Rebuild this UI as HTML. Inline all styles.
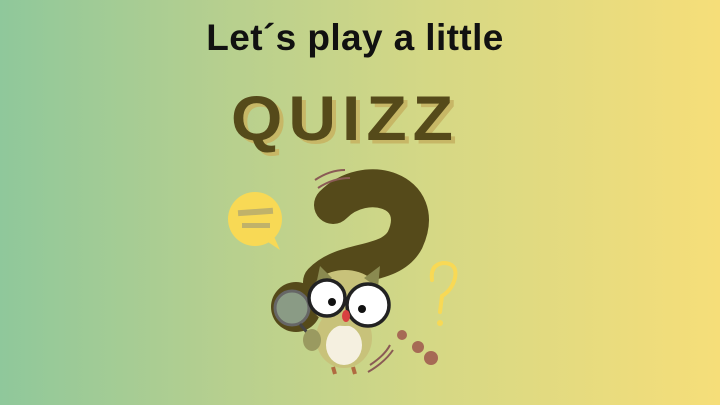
<!DOCTYPE html>
<html><head><meta charset="utf-8"><style>
html,body{margin:0;padding:0}
body{width:720px;height:405px;overflow:hidden;position:relative;background:linear-gradient(90deg,#8fc89b 0%,#b5cf8f 30%,#d5d885 60%,#f6de79 100%);font-family:"Liberation Sans",sans-serif}
.t1{position:absolute;left:-5px;width:720px;top:17px;text-align:center;font-size:37px;font-weight:bold;color:#111;letter-spacing:0.4px}
.q{position:absolute;left:-15px;width:720px;top:80px;text-align:center;font-size:66px;font-weight:900;color:#554a1a;letter-spacing:6px;text-shadow:4px 4px 0 #c7b766;transform:scale(1,0.95)}
svg{position:absolute;left:0;top:0}
</style></head><body>
<div class="t1">Let´s play a little</div>
<div class="q">QUIZZ</div>
<svg width="720" height="405">
<path d="M333 205 C365 172,428 190,405 240 C390 268,345 258,322 282" fill="none" stroke="#554a1a" stroke-width="38" stroke-linecap="round"/>
<path d="M315 180 Q330 170 345 170 M318 188 Q333 178 350 178" stroke="#8a5a55" stroke-width="2" fill="none"/>
<circle cx="255" cy="219" r="27" fill="#f8d955"/>
<path d="M262 238 L280 250 L272 232Z" fill="#f8d955"/>
<rect x="238" y="209" width="35" height="6" fill="#c0b26a" transform="rotate(-4 255 212)"/>
<rect x="242" y="223" width="28" height="5" fill="#c0b26a"/>
<path d="M432 280 Q430 265 443 263 Q458 263 455 278 Q452 290 442 296 L440 312" fill="none" stroke="#f8d955" stroke-width="4" stroke-linecap="round"/>
<circle cx="440" cy="323" r="3" fill="#f8d955"/>
<circle cx="402" cy="335" r="5" fill="#a66a55"/>
<circle cx="418" cy="347" r="6" fill="#a66a55"/>
<circle cx="431" cy="358" r="7" fill="#a66a55"/>
<circle cx="296" cy="307" r="25" fill="#554a1a"/>
<circle cx="292" cy="308" r="17" fill="#8a9b85" stroke="#666" stroke-width="3"/>
<line x1="300" y1="324" x2="310" y2="336" stroke="#444" stroke-width="3"/>
<ellipse cx="344" cy="338" rx="28" ry="30" fill="#c8c27a"/>
<ellipse cx="344" cy="345" rx="18" ry="20" fill="#f5f0e0"/>
<ellipse cx="345" cy="298" rx="36" ry="28" fill="#c8c27a"/>
<path d="M316 285 L320 266 L332 278Z M364 278 L380 266 L378 288Z" fill="#8a8a50"/>
<ellipse cx="312" cy="340" rx="9" ry="11" fill="#9a9a60"/>
<circle cx="327" cy="298" r="18" fill="#fff" stroke="#222" stroke-width="3.5"/>
<circle cx="368" cy="305" r="21" fill="#fff" stroke="#222" stroke-width="3.5"/>
<circle cx="332" cy="302" r="4" fill="#111"/>
<circle cx="362" cy="309" r="4" fill="#111"/>
<ellipse cx="346" cy="316" rx="4" ry="6" fill="#d94040"/>
<path d="M333 367 L335 374 M353 367 L355 374" stroke="#b06a40" stroke-width="4"/>
<path d="M370 365 Q385 355 390 345 M368 372 Q385 362 393 350" stroke="#8a5a55" stroke-width="2" fill="none"/>
</svg>
</body></html>
